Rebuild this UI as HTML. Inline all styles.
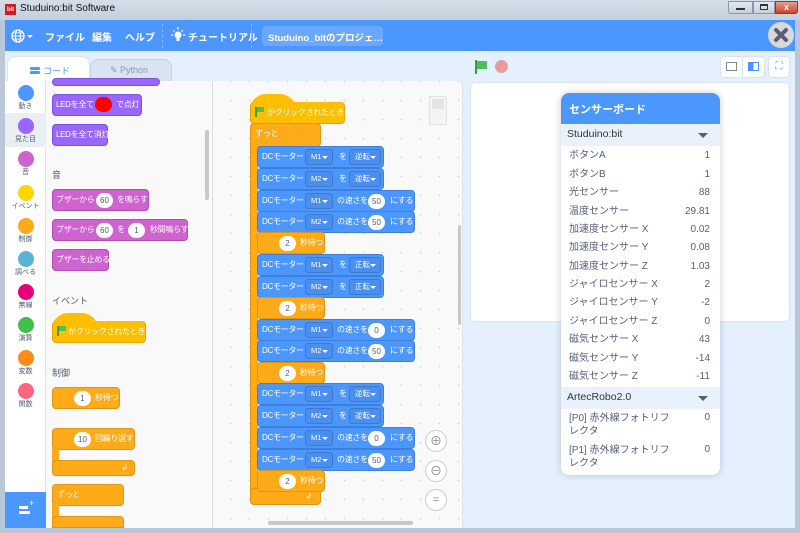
<!DOCTYPE html>
<html><head><meta charset="utf-8">
<style>
*{box-sizing:border-box;margin:0;padding:0}
body{width:800px;height:533px;overflow:hidden;position:relative;background:#b9c7d6;font-family:"Liberation Sans","Noto Sans CJK JP",sans-serif}
.a{position:absolute}
.t{position:absolute;white-space:nowrap}
.blk{position:absolute;border-radius:4px;color:#fff;font-size:8px;line-height:20px;white-space:nowrap}
.s{position:absolute;top:0;font-size:8px;line-height:20px;letter-spacing:-0.3px}
.b{background:#4c97ff;border:1px solid #3d7fd9;height:22px}
.o{background:#ffab19;border:1px solid #e0960f}
.p{background:#9966ff;border:1px solid #7d52d9}
.m{background:#cf63cf;border:1px solid #b04fb0}
.y{background:#ffbf00;border:1px solid #e0a800}
.dd{position:absolute;top:2px;height:16px;border:1px solid #3d79cc;background:#4a8ff0;border-radius:3px;font-size:7.5px;line-height:14px;padding-left:5px}
.dd:after{content:"";position:absolute;right:4px;top:6px;border:3px solid transparent;border-top:3px solid #fff}
.pill{position:absolute;top:3px;height:15px;background:#fff;color:#575e75;border-radius:8px;font-size:8px;line-height:15px;text-align:center}
.cat{position:absolute;left:18px;width:16px;height:16px;border-radius:50%}
.cl{position:absolute;width:41px;text-align:center;font-size:7px;color:#575e75}
.row{position:absolute;left:8px;right:10px;font-size:10px;color:#575e75;height:19px;line-height:19px}
.row span{position:absolute;right:0}
</style></head><body>
<div class="a" style="left:0;top:0;width:800px;height:20px;background:linear-gradient(#d6dee8,#c3cfdc)"></div>
<div class="a" style="left:5px;top:4px;width:11px;height:11px;background:#d01c1c;color:#fff;font-size:6px;line-height:12px;text-align:center;font-weight:bold">bit</div>
<div class="t" style="left:20px;top:3px;font-size:10px;color:#111">Studuino:bit Software</div>
<div class="a" style="left:728px;top:1px;width:25px;height:13px;background:linear-gradient(#e4e9ef,#c6d0dc);border:1px solid #8a96a5;border-radius:0 0 0 3px"></div>
<div class="a" style="left:736px;top:8px;width:9px;height:2px;background:#333"></div>
<div class="a" style="left:753px;top:1px;width:22px;height:13px;background:linear-gradient(#e4e9ef,#c6d0dc);border:1px solid #8a96a5"></div>
<div class="a" style="left:760px;top:4px;width:8px;height:6px;border:1px solid #333;border-top-width:2px"></div>
<div class="a" style="left:775px;top:1px;width:23px;height:13px;background:linear-gradient(#e8a090,#c6452f);border:1px solid #8a3a30;border-radius:0 0 3px 0;color:#fff;font-size:9px;line-height:11px;text-align:center;font-weight:bold">x</div>
<div class="a" style="left:5px;top:20px;width:790px;height:508px;background:#e5f0ff"></div>
<div class="a" style="left:5px;top:20px;width:790px;height:31px;background:#4c97ff"></div>
<svg class="a" style="left:11px;top:28px" width="24" height="16" viewBox="0 0 24 16"><circle cx="7" cy="8" r="6" fill="none" stroke="#fff" stroke-width="1.3"/><ellipse cx="7" cy="8" rx="2.6" ry="6" fill="none" stroke="#fff" stroke-width="1"/><line x1="1" y1="8" x2="13" y2="8" stroke="#fff"/><line x1="2" y1="5" x2="12" y2="5" stroke="#fff" stroke-width=".8"/><line x1="2" y1="11" x2="12" y2="11" stroke="#fff" stroke-width=".8"/><path d="M16 7h6l-3 3z" fill="#fff"/></svg>
<div class="t" style="left:45px;top:29px;font-size:10px;color:#fff;font-weight:bold">ファイル</div>
<div class="t" style="left:92px;top:29px;font-size:10px;color:#fff;font-weight:bold">編集</div>
<div class="t" style="left:125px;top:29px;font-size:10px;color:#fff;font-weight:bold">ヘルプ</div>
<div class="a" style="left:162px;top:24px;height:24px;border-left:1px dashed #86b6ff"></div>
<svg class="a" style="left:170px;top:27px" width="16" height="18" viewBox="0 0 16 18"><circle cx="8" cy="8" r="3.5" fill="#fff"/><rect x="6.5" y="11" width="3" height="3" fill="#fff"/><g stroke="#fff" stroke-width="1.2"><line x1="8" y1="0" x2="8" y2="2.5"/><line x1="1" y1="8" x2="3" y2="8"/><line x1="13" y1="8" x2="15" y2="8"/><line x1="3" y1="3" x2="4.5" y2="4.5"/><line x1="13" y1="3" x2="11.5" y2="4.5"/></g></svg>
<div class="t" style="left:188px;top:29px;font-size:10px;color:#fff;font-weight:bold">チュートリアル</div>
<div class="a" style="left:251px;top:24px;height:24px;border-left:1px dashed #86b6ff"></div>
<div class="a" style="left:262px;top:26px;width:121px;height:20px;background:#6aa8ff;border-radius:4px"></div>
<div class="t" style="left:268px;top:30px;font-size:9.5px;color:#fff;font-weight:bold">Studuino_bitのプロジェ…</div>
<div class="a" style="left:768px;top:22px;width:26px;height:26px;border-radius:50%;background:#d9d9d9"></div>
<svg class="a" style="left:768px;top:22px" width="26" height="26"><path d="M8 8L18 18M18 8L8 18" stroke="#575e75" stroke-width="4" stroke-linecap="round"/></svg>
<div class="a" style="left:90px;top:59px;width:82px;height:23px;background:#d9e3f2;border:1px solid #c6d3e6;border-bottom:none;border-radius:8px 8px 0 0"></div>
<div class="t" style="left:110px;top:65px;font-size:9px;color:#8c9aac">✎ Python</div>
<div class="a" style="left:7px;top:56px;width:83px;height:26px;background:#fff;border:1px solid #d9e3f2;border-bottom:none;border-radius:8px 8px 0 0"></div>
<div class="a" style="left:30px;top:67px;width:10px;height:3px;background:#4c97ff;border-radius:1px"></div>
<div class="a" style="left:30px;top:71px;width:10px;height:3px;background:#4c97ff;border-radius:1px"></div>
<div class="t" style="left:43px;top:64px;font-size:9px;color:#4c97ff">コード</div>
<div class="a" style="left:5px;top:81px;width:41px;height:447px;background:#fff;border-right:1px solid #d9e3f2"></div>
<div class="a" style="left:5px;top:113px;width:41px;height:34px;background:#e9eef2"></div>
<div class="cat" style="top:85px;background:#4c97ff"></div><div class="cl" style="left:5px;top:101px">動き</div>
<div class="cat" style="top:118px;background:#9966ff"></div><div class="cl" style="left:5px;top:134px">見た目</div>
<div class="cat" style="top:151px;background:#cf63cf"></div><div class="cl" style="left:5px;top:167px">音</div>
<div class="cat" style="top:185px;background:#ffd500"></div><div class="cl" style="left:5px;top:201px">イベント</div>
<div class="cat" style="top:218px;background:#ffab19"></div><div class="cl" style="left:5px;top:234px">制御</div>
<div class="cat" style="top:251px;background:#5cb1d6"></div><div class="cl" style="left:5px;top:267px">調べる</div>
<div class="cat" style="top:284px;background:#e6007e"></div><div class="cl" style="left:5px;top:300px">無線</div>
<div class="cat" style="top:317px;background:#40bf4a"></div><div class="cl" style="left:5px;top:333px">演算</div>
<div class="cat" style="top:350px;background:#ff8c1a"></div><div class="cl" style="left:5px;top:366px">変数</div>
<div class="cat" style="top:383px;background:#ff6680"></div><div class="cl" style="left:5px;top:399px">関数</div>
<div class="a" style="left:5px;top:492px;width:41px;height:36px;background:#4c97ff"></div>
<div class="a" style="left:19px;top:506px;width:9px;height:3px;background:#fff"></div>
<div class="a" style="left:19px;top:511px;width:11px;height:3px;background:#fff"></div>
<div class="t" style="left:29px;top:498px;font-size:9px;color:#fff">+</div>
<!-- palette -->
<div class="a" style="left:46px;top:81px;width:167px;height:447px;background:#f9f9f9;border-right:1px solid #ddd"></div>
<div class="a" style="left:205px;top:130px;width:4px;height:70px;background:#c8c8c8;border-radius:2px"></div>
<div class="blk p" style="left:52px;top:78px;width:108px;height:8px"></div>
<div class="blk p" style="left:52px;top:94px;width:90px;height:22px"><span class="s" style="left:3px">LEDを全て</span><span class="s" style="left:63px">で点灯</span></div>
<div class="a" style="left:95px;top:97px;width:17px;height:15px;background:#f00;border-radius:8px"></div>
<div class="blk p" style="left:52px;top:124px;width:56px;height:22px"><span class="s" style="left:3px">LEDを全て消灯</span></div>
<div class="t" style="left:52px;top:168px;font-size:9px;color:#575e75">音</div>
<div class="blk m" style="left:52px;top:189px;width:97px;height:22px"><span class="s" style="left:3px">ブザーから</span><span class="s" style="left:64px">を鳴らす</span></div>
<div class="pill" style="left:96px;top:193px;width:17px">60</div>
<div class="blk m" style="left:52px;top:219px;width:136px;height:22px"><span class="s" style="left:3px">ブザーから</span><span class="s" style="left:64px">を</span><span class="s" style="left:97px">秒間鳴らす</span></div>
<div class="pill" style="left:96px;top:223px;width:17px">60</div>
<div class="pill" style="left:128px;top:223px;width:17px">1</div>
<div class="blk m" style="left:52px;top:249px;width:57px;height:22px"><span class="s" style="left:3px">ブザーを止める</span></div>
<div class="t" style="left:52px;top:294px;font-size:9px;color:#575e75">イベント</div>
<div class="a" style="left:52px;top:313px;width:46px;height:16px;background:#ffbf00;border-radius:23px 23px 0 0"></div>
<div class="blk y" style="left:52px;top:321px;width:94px;height:22px;border-top:none"><span class="s" style="left:15px;top:1px">がクリックされたとき</span></div>
<div class="a" style="left:57px;top:326px;width:2px;height:10px;background:#3a9d3a"></div><div class="a" style="left:59px;top:326px;width:7px;height:5px;background:#4cbf56"></div>
<div class="t" style="left:52px;top:366px;font-size:9px;color:#575e75">制御</div>
<div class="blk o" style="left:52px;top:387px;width:68px;height:22px"><span class="s" style="left:42px">秒待つ</span></div>
<div class="pill" style="left:74px;top:391px;width:17px">1</div>
<div class="blk o" style="left:52px;top:428px;width:83px;height:22px"><span class="s" style="left:42px">回繰り返す</span></div>
<div class="pill" style="left:74px;top:432px;width:17px">10</div>
<div class="a" style="left:52px;top:448px;width:7px;height:15px;background:#ffab19"></div>
<div class="blk o" style="left:52px;top:460px;width:83px;height:16px;text-align:right;padding-right:6px;line-height:14px">↲</div>
<div class="blk o" style="left:52px;top:484px;width:72px;height:22px"><span class="s" style="left:4px">ずっと</span></div>
<div class="a" style="left:52px;top:504px;width:7px;height:15px;background:#ffab19"></div>
<div class="blk o" style="left:52px;top:516px;width:72px;height:12px;border-radius:4px 4px 0 0"></div>
<!-- workspace -->
<div class="a" style="left:213px;top:81px;width:250px;height:447px;background-color:#f9f9f9;background-image:radial-gradient(#dcdcdc 0.8px,transparent 1px);background-size:19px 19px;background-position:8px 10px;border-radius:0 6px 0 0;border-right:1px solid #d9e3f2"></div>
<div class="a" style="left:429px;top:96px;width:18px;height:29px;border:1px solid #e2e2e2;background:#f4f4f4"></div>
<div class="a" style="left:432px;top:99px;width:12px;height:10px;background:#e4e4e4"></div>
<div class="a" style="left:458px;top:225px;width:3px;height:100px;background:#c8c8c8;border-radius:2px"></div>
<div class="a" style="left:268px;top:521px;width:145px;height:4px;background:#c8c8c8;border-radius:2px"></div>
<div class="a" style="left:425px;top:430px;width:22px;height:22px;border:1px solid #ccc;border-radius:50%;background:#fff;color:#888;font-size:12px;line-height:20px;text-align:center">⊕</div>
<div class="a" style="left:425px;top:460px;width:22px;height:22px;border:1px solid #ccc;border-radius:50%;background:#fff;color:#888;font-size:12px;line-height:20px;text-align:center">⊖</div>
<div class="a" style="left:425px;top:489px;width:22px;height:22px;border:1px solid #ccc;border-radius:50%;background:#fff;color:#888;font-size:11px;line-height:20px;text-align:center">=</div>
<!-- script -->
<div class="a" style="left:250px;top:94px;width:46px;height:16px;background:#ffbf00;border-radius:23px 23px 0 0"></div>
<div class="blk y" style="left:250px;top:102px;width:95px;height:22px;border-top:none"><span class="s" style="left:16px;top:1px">がクリックされたとき</span></div>
<div class="a" style="left:255px;top:107px;width:2px;height:10px;background:#3a9d3a"></div><div class="a" style="left:257px;top:107px;width:7px;height:5px;background:#4cbf56"></div>
<div class="blk o" style="left:250px;top:123px;width:71px;height:24px"><span class="s" style="left:4px">ずっと</span></div>
<div class="a" style="left:250px;top:140px;width:8px;height:355px;background:#ffab19;border-left:1px solid #e0960f"></div>
<div class="blk o" style="left:250px;top:488px;width:71px;height:17px;text-align:right;padding-right:8px;line-height:16px">↲</div>

<div class="blk b" style="left:257px;top:146px;width:127px"><span class="s" style="left:4px">DCモーター</span><div class="dd" style="left:47px;width:28px">M1</div><span class="s" style="left:81px">を</span><div class="dd" style="left:91px;width:32px">逆転</div></div>
<div class="blk b" style="left:257px;top:168px;width:127px"><span class="s" style="left:4px">DCモーター</span><div class="dd" style="left:47px;width:28px">M2</div><span class="s" style="left:81px">を</span><div class="dd" style="left:91px;width:32px">逆転</div></div>
<div class="blk b" style="left:257px;top:190px;width:158px"><span class="s" style="left:4px">DCモーター</span><div class="dd" style="left:47px;width:28px">M1</div><span class="s" style="left:79px">の速さを</span><div class="pill" style="left:110px;width:17px">50</div><span class="s" style="left:132px">にする</span></div>
<div class="blk b" style="left:257px;top:211px;width:158px"><span class="s" style="left:4px">DCモーター</span><div class="dd" style="left:47px;width:28px">M2</div><span class="s" style="left:79px">の速さを</span><div class="pill" style="left:110px;width:17px">50</div><span class="s" style="left:132px">にする</span></div>
<div class="blk o" style="left:257px;top:232px;width:68px;height:22px"><span class="s" style="left:42px">秒待つ</span></div><div class="pill" style="left:279px;top:236px;width:17px">2</div>
<div class="blk b" style="left:257px;top:254px;width:127px"><span class="s" style="left:4px">DCモーター</span><div class="dd" style="left:47px;width:28px">M1</div><span class="s" style="left:81px">を</span><div class="dd" style="left:91px;width:32px">正転</div></div>
<div class="blk b" style="left:257px;top:276px;width:127px"><span class="s" style="left:4px">DCモーター</span><div class="dd" style="left:47px;width:28px">M2</div><span class="s" style="left:81px">を</span><div class="dd" style="left:91px;width:32px">正転</div></div>
<div class="blk o" style="left:257px;top:297px;width:68px;height:22px"><span class="s" style="left:42px">秒待つ</span></div><div class="pill" style="left:279px;top:301px;width:17px">2</div>
<div class="blk b" style="left:257px;top:319px;width:158px"><span class="s" style="left:4px">DCモーター</span><div class="dd" style="left:47px;width:28px">M1</div><span class="s" style="left:79px">の速さを</span><div class="pill" style="left:110px;width:17px">0</div><span class="s" style="left:132px">にする</span></div>
<div class="blk b" style="left:257px;top:340px;width:158px"><span class="s" style="left:4px">DCモーター</span><div class="dd" style="left:47px;width:28px">M2</div><span class="s" style="left:79px">の速さを</span><div class="pill" style="left:110px;width:17px">50</div><span class="s" style="left:132px">にする</span></div>
<div class="blk o" style="left:257px;top:362px;width:68px;height:22px"><span class="s" style="left:42px">秒待つ</span></div><div class="pill" style="left:279px;top:366px;width:17px">2</div>
<div class="blk b" style="left:257px;top:383px;width:127px"><span class="s" style="left:4px">DCモーター</span><div class="dd" style="left:47px;width:28px">M1</div><span class="s" style="left:81px">を</span><div class="dd" style="left:91px;width:32px">逆転</div></div>
<div class="blk b" style="left:257px;top:405px;width:127px"><span class="s" style="left:4px">DCモーター</span><div class="dd" style="left:47px;width:28px">M2</div><span class="s" style="left:81px">を</span><div class="dd" style="left:91px;width:32px">逆転</div></div>
<div class="blk b" style="left:257px;top:427px;width:158px"><span class="s" style="left:4px">DCモーター</span><div class="dd" style="left:47px;width:28px">M1</div><span class="s" style="left:79px">の速さを</span><div class="pill" style="left:110px;width:17px">0</div><span class="s" style="left:132px">にする</span></div>
<div class="blk b" style="left:257px;top:449px;width:158px"><span class="s" style="left:4px">DCモーター</span><div class="dd" style="left:47px;width:28px">M2</div><span class="s" style="left:79px">の速さを</span><div class="pill" style="left:110px;width:17px">50</div><span class="s" style="left:132px">にする</span></div>
<div class="blk o" style="left:257px;top:470px;width:68px;height:22px"><span class="s" style="left:42px">秒待つ</span></div><div class="pill" style="left:279px;top:474px;width:17px">2</div>

<!-- stage header -->
<div class="a" style="left:475px;top:60px;width:2px;height:14px;background:#3a9d3a"></div>
<div class="a" style="left:477px;top:61px;width:10px;height:8px;background:#4cbf56"></div>
<div class="a" style="left:495px;top:60px;width:13px;height:13px;border-radius:50%;background:#e89a9e"></div>
<div class="a" style="left:720px;top:56px;width:45px;height:22px;background:#fff;border:1px solid #d9e3f2;border-radius:4px"></div>
<div class="a" style="left:742px;top:56px;width:1px;height:22px;background:#d9e3f2"></div>
<div class="a" style="left:726px;top:62px;width:11px;height:9px;border:1px solid #888"></div>
<div class="a" style="left:748px;top:62px;width:11px;height:9px;border:1px solid #4c97ff;background:linear-gradient(90deg,#4c97ff 50%,#fff 50%)"></div>
<div class="a" style="left:768px;top:56px;width:22px;height:22px;background:#fff;border:1px solid #d9e3f2;border-radius:4px;color:#4c97ff;font-size:10px;text-align:center;line-height:20px">⛶</div>
<div class="a" style="left:470px;top:82px;width:320px;height:240px;background:#fff;border:1px solid #d9e3f2;border-radius:5px"></div>
<!-- sensor board -->
<div class="a" style="left:561px;top:93px;width:159px;height:382px;background:#fff;border-radius:8px;box-shadow:0 0 8px rgba(0,0,0,.2);overflow:hidden">
<div class="a" style="left:0;top:0;width:159px;height:31px;background:#4c97ff"></div>
<div class="t" style="left:8px;top:8px;font-size:11px;color:#fff;font-weight:bold">センサーボード</div>
<div class="a" style="left:0;top:31px;width:159px;height:22px;background:#e9f1fc"></div>
<div class="t" style="left:6px;top:35px;font-size:10.5px;color:#333">Studuino:bit</div>
<div class="a" style="left:137px;top:40px;border:5px solid transparent;border-top:5px solid #575e75"></div>
<div class="row" style="top:53px">ボタンA<span>1</span></div>
<div class="row" style="top:72px">ボタンB<span>1</span></div>
<div class="row" style="top:90px">光センサー<span>88</span></div>
<div class="row" style="top:109px">温度センサー<span>29.81</span></div>
<div class="row" style="top:127px">加速度センサー X<span>0.02</span></div>
<div class="row" style="top:145px">加速度センサー Y<span>0.08</span></div>
<div class="row" style="top:164px">加速度センサー Z<span>1.03</span></div>
<div class="row" style="top:182px">ジャイロセンサー X<span>2</span></div>
<div class="row" style="top:200px">ジャイロセンサー Y<span>-2</span></div>
<div class="row" style="top:219px">ジャイロセンサー Z<span>0</span></div>
<div class="row" style="top:237px">磁気センサー X<span>43</span></div>
<div class="row" style="top:256px">磁気センサー Y<span>-14</span></div>
<div class="row" style="top:274px">磁気センサー Z<span>-11</span></div>
<div class="a" style="left:0;top:294px;width:159px;height:22px;background:#e9f1fc"></div>
<div class="t" style="left:6px;top:298px;font-size:10.5px;color:#333">ArtecRobo2.0</div>
<div class="a" style="left:137px;top:303px;border:5px solid transparent;border-top:5px solid #575e75"></div>
<div class="a" style="left:8px;top:319px;width:110px;font-size:10px;line-height:13px;color:#575e75">[P0] 赤外線フォトリフレクタ</div><div class="t" style="right:10px;top:319px;font-size:10px;color:#575e75">0</div>
<div class="a" style="left:8px;top:351px;width:110px;font-size:10px;line-height:13px;color:#575e75">[P1] 赤外線フォトリフレクタ</div><div class="t" style="right:10px;top:351px;font-size:10px;color:#575e75">0</div>
</div>
</body></html>
